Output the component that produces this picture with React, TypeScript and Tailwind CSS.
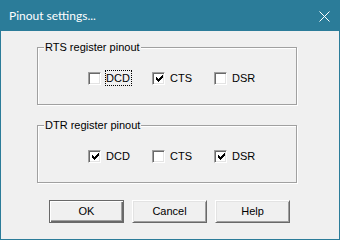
import React from "react";

const CHECK = [
  "......X",
  ".....XX",
  "X...XXX",
  "XX.XXX.",
  "XXXXX..",
  ".XXX...",
  "..X....",
];

function CheckMark() {
  const rects: React.ReactNode[] = [];
  CHECK.forEach((row, y) =>
    row.split("").forEach((c, x) => {
      if (c === "X") rects.push(<rect key={`${x}-${y}`} x={x} y={y} width={1} height={1} fill="#000" />);
    })
  );
  return (
    <svg width="7" height="7" viewBox="0 0 7 7" shapeRendering="crispEdges">
      {rects}
    </svg>
  );
}

function Check({ label, checked, focused, width }: { label: string; checked?: boolean; focused?: boolean; width: string }) {
  return (
    <div className={`flex items-center gap-[4px] ${width}`}>
      <div className="w-[13px] h-[13px] shrink-0 bg-white border border-t-[#a0a0a0] border-l-[#a0a0a0] border-r-white border-b-white shadow-[inset_1px_1px_0_#696969,inset_-1px_-1px_0_#e3e3e3] flex items-center justify-center pl-[1px] pt-[1px]">
        {checked && <CheckMark />}
      </div>
      <span className={`border leading-[14px] pr-[1px] ${focused ? "border-dotted border-black" : "border-transparent"}`}>{label}</span>
    </div>
  );
}

function Group({ title, checks, className }: { title: string; checks: [boolean, boolean, boolean]; className?: string }) {
  return (
    <div className={`w-[260px] h-[58px] border border-[#a0a0a0] shadow-[1px_1px_0_#ffffff,inset_1px_1px_0_#ffffff] ${className ?? ""}`}>
      <div className="w-fit -mt-[7px] ml-[6px] px-[1px] bg-[#f0f0f0] leading-[13px]">{title}</div>
      <div className="flex pl-[50px] mt-[16px]">
        <Check label="DCD" checked={checks[0]} focused={title.startsWith("RTS")} width="w-[64px]" />
        <Check label="CTS" checked={checks[1]} width="w-[62px]" />
        <Check label="DSR" checked={checks[2]} width="w-[60px]" />
      </div>
    </div>
  );
}

function Button({ label, isDefault }: { label: string; isDefault?: boolean }) {
  return (
    <button
      className={`w-[75px] h-[23px] bg-[#f0f0f0] text-black leading-none ${
        isDefault
          ? "border border-[#696969] shadow-[inset_1px_1px_0_#ffffff,inset_-1px_-1px_0_#696969,inset_-2px_-2px_0_#a0a0a0]"
          : "border border-t-white border-l-white border-r-[#696969] border-b-[#696969] shadow-[inset_1px_1px_0_#e3e3e3,inset_-1px_-1px_0_#a0a0a0]"
      }`}
    >
      {label}
    </button>
  );
}

export default function App() {
  return (
    <div className="w-[340px] h-[240px] bg-[#2b7c99] flex flex-col font-['Liberation_Sans',Arial,sans-serif] text-[11px] text-black">
      <div className="h-[31px] flex items-center justify-between pl-[9px] pr-[10px] text-white font-['Lato',sans-serif] text-[12px]">
        <span>Pinout settings...</span>
        <svg width="11" height="11" viewBox="0 0 11 11" className="mt-[1px]">
          <line x1="0.5" y1="0.5" x2="10.5" y2="10.5" stroke="#fff" strokeWidth="1" />
          <line x1="10.5" y1="0.5" x2="0.5" y2="10.5" stroke="#fff" strokeWidth="1" />
        </svg>
      </div>
      <div className="flex-1 mx-[1px] mb-[1px] bg-[#f0f0f0] pl-[36px] pt-[16px]">
        <Group title="RTS register pinout" checks={[false, true, false]} />
        <Group title="DTR register pinout" checks={[true, false, true]} className="mt-[20px]" />
        <div className="flex gap-[8px] ml-[12px] mt-[17px]">
          <Button label="OK" isDefault />
          <Button label="Cancel" />
          <Button label="Help" />
        </div>
      </div>
    </div>
  );
}
